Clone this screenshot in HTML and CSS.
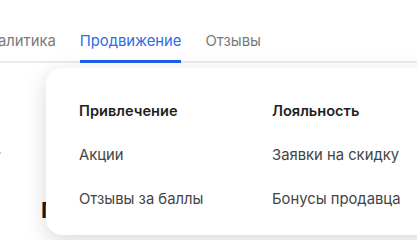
FILE: index.html
```html
<!DOCTYPE html>
<html lang="ru">
<head>
<meta charset="utf-8">
<link rel="stylesheet" href="styles.css">
</head>
<body>
<div class="page">
  <nav class="tabs">
    <a class="tab">Аналитика</a>
    <a class="tab active">Продвижение</a>
    <a class="tab">Отзывы</a>
  </nav>
  <div class="content">
    <div class="crumb">·</div>
    <h1 class="title">Продвижение товаров</h1>
  </div>
  <div class="dropdown">
    <div class="col">
      <div class="col-title">Привлечение</div>
      <a class="item">Акции</a>
      <a class="item">Отзывы за баллы</a>
    </div>
    <div class="col">
      <div class="col-title">Лояльность</div>
      <a class="item">Заявки на скидку</a>
      <a class="item">Бонусы продавца</a>
    </div>
  </div>
</div>
</body>
</html>
```

FILE: styles.css
```css
html, body {
  margin: 0;
  padding: 0;
  background: #ffffff;
}
body {
  font-family: "Inter", "Noto Sans", sans-serif;
  width: 417px;
  height: 240px;
  overflow: hidden;
}
.page {
  position: relative;
  height: 240px;
}
.tabs {
  display: flex;
  gap: 24px;
  padding-top: 31px;
  border-bottom: 2px solid #ececec;
  margin-left: -21px;
}
.tab {
  font-size: 14.8px;
  line-height: 20px;
  color: #7a7a7a;
  padding-bottom: 9px;
  border-bottom: 3px solid transparent;
  margin-bottom: -2px;
  white-space: nowrap;
}
.tab.active {
  color: #2e6be6;
  border-bottom-color: #1f5fe8;
}
.crumb {
  margin-top: 80px;
  font-size: 14px;
  line-height: 20px;
  color: #aaaaaa;
  margin-left: -2px;
}
.title {
  margin: 33px 0 0 41px;
  font-size: 22px;
  line-height: 28px;
  font-weight: 700;
  color: #1c1c1c;
  white-space: nowrap;
}
.dropdown {
  position: absolute;
  left: 46px;
  top: 68px;
  width: 440px;
  box-sizing: border-box;
  padding: 33px 0 26px 33px;
  background: #ffffff;
  border-radius: 16px;
  box-shadow: 0 6px 22px rgba(0, 0, 0, 0.15);
  display: grid;
  grid-template-columns: 193px 193px;
}
.col {
  display: flex;
  flex-direction: column;
  gap: 24px;
}
.col-title {
  font-size: 14.6px;
  line-height: 20px;
  font-weight: 600;
  color: #1f1f1f;
}
.item {
  font-size: 14.8px;
  line-height: 20px;
  color: #444444;
  white-space: nowrap;
}
```
